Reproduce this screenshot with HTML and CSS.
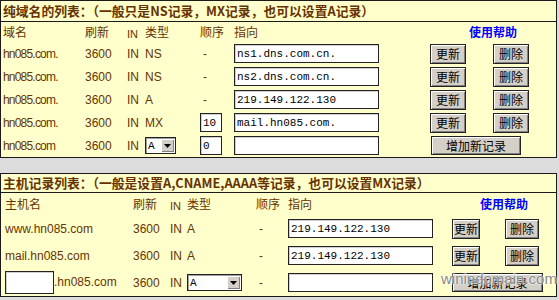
FILE: index.html
```html
<!DOCTYPE html>
<html lang="zh-CN">
<head>
    <meta charset="UTF-8">
    <title>域名解析管理</title>
    <link rel="stylesheet" href="styles.css">
</head>
<body>
<div class="panel panel-domain">
    <div class="panel-title">纯域名的列表：（一般只是NS记录，MX记录，也可以设置A记录）</div>
    <table class="records">
        <colgroup>
            <col style="width:84px"><col style="width:42px"><col style="width:18px"><col style="width:55px">
            <col style="width:34px"><col style="width:196px"><col style="width:63px"><col style="width:63px">
        </colgroup>
        <tr class="head">
            <td class="first">域名</td><td>刷新</td><td class="in-head">IN</td><td>类型</td>
            <td>顺序</td><td>指向</td><td colspan="2" class="help"><a href="#">使用帮助</a></td>
        </tr>
        <tr>
            <td class="first name">hn085.com.</td><td>3600</td><td>IN</td><td>NS</td><td class="dash">-</td>
            <td><input class="target" type="text" value="ns1.dns.com.cn."></td>
            <td><button class="btn">更新</button></td><td><button class="btn">删除</button></td>
        </tr>
        <tr>
            <td class="first name">hn085.com.</td><td>3600</td><td>IN</td><td>NS</td><td class="dash">-</td>
            <td><input class="target" type="text" value="ns2.dns.com.cn."></td>
            <td><button class="btn">更新</button></td><td><button class="btn">删除</button></td>
        </tr>
        <tr>
            <td class="first name">hn085.com.</td><td>3600</td><td>IN</td><td>A</td><td class="dash">-</td>
            <td><input class="target" type="text" value="219.149.122.130"></td>
            <td><button class="btn">更新</button></td><td><button class="btn">删除</button></td>
        </tr>
        <tr>
            <td class="first name">hn085.com.</td><td>3600</td><td>IN</td><td>MX</td>
            <td><input class="order" type="text" value="10"></td>
            <td><input class="target" type="text" value="mail.hn085.com."></td>
            <td><button class="btn">更新</button></td><td><button class="btn">删除</button></td>
        </tr>
        <tr>
            <td class="first name">hn085.com</td><td>3600</td><td>IN</td>
            <td><span class="select select-sm"><span class="select-val">A</span><span class="select-arrow"><svg width="7" height="4" viewBox="0 0 7 4"><path d="M0 0H7L3.5 4Z" fill="#000"/></svg></span></span></td>
            <td><input class="order" type="text" value="0"></td>
            <td><input class="target" type="text" value=""></td>
            <td colspan="2"><button class="btn btn-add">增加新记录</button></td>
        </tr>
    </table>
</div>

<div class="panel panel-host">
    <div class="panel-title">主机记录列表：（一般是设置A,CNAME,AAAA等记录，也可以设置MX记录）</div>
    <table class="records">
        <colgroup>
            <col style="width:132px"><col style="width:37px"><col style="width:17px"><col style="width:69px">
            <col style="width:32px"><col style="width:164px"><col style="width:53px"><col style="width:51px">
        </colgroup>
        <tr class="head">
            <td class="first">主机名</td><td>刷新</td><td class="in-head">IN</td><td>类型</td>
            <td>顺序</td><td>指向</td><td colspan="2" class="help"><a href="#">使用帮助</a></td>
        </tr>
        <tr>
            <td class="first">www.hn085.com</td><td>3600</td><td>IN</td><td>A</td><td class="dash">-</td>
            <td><input class="target" type="text" value="219.149.122.130"></td>
            <td><button class="btn btn-upd">更新</button></td><td><button class="btn btn-del">删除</button></td>
        </tr>
        <tr>
            <td class="first">mail.hn085.com</td><td>3600</td><td>IN</td><td>A</td><td class="dash">-</td>
            <td><input class="target" type="text" value="219.149.122.130"></td>
            <td><button class="btn btn-upd">更新</button></td><td><button class="btn btn-del">删除</button></td>
        </tr>
        <tr>
            <td class="first"><input class="host" type="text" value="">.hn085.com</td><td>3600</td><td>IN</td>
            <td><span class="select select-lg"><span class="select-val">A</span><span class="select-arrow"><svg width="7" height="4" viewBox="0 0 7 4"><path d="M0 0H7L3.5 4Z" fill="#000"/></svg></span></span></td>
            <td class="dash">-</td>
            <td><input class="target" type="text" value=""></td>
            <td colspan="2"><button class="btn btn-add">增加新记录</button></td>
        </tr>
    </table>
    <div class="watermark">winindomain.com</div>
</div>
</body>
</html>
```

FILE: styles.css
```css
body {
    margin: 0;
    background-color: #dcdcdc;
    font-family: "Liberation Sans", Arial, "Noto Sans CJK SC", sans-serif;
    font-size: 12px;
    color: #663300;
}

.panel {
    position: relative;
    width: 555px;
    background-color: #ffffcc;
    border: 1px solid #1a1a1a;
}

.panel-domain {
    margin-bottom: 15px;
}

.panel-title {
    height: 20px;
    line-height: 20px;
    padding-left: 2px;
    font-family: "Noto Sans CJK SC", sans-serif;
    font-weight: bold;
    font-size: 12.8px;
    color: #663300;
    border-bottom: 1px solid #1a1a1a;
    white-space: nowrap;
}

.panel-host .panel-title {
    height: 18px;
    line-height: 18px;
}

.records {
    table-layout: fixed;
    width: 555px;
    border-collapse: collapse;
    border-spacing: 0;
}

.records td {
    padding: 0;
    height: 23px;
    line-height: 14px;
    vertical-align: middle;
    white-space: nowrap;
}

.records .head td {
    height: 20px;
    font-family: "Noto Sans CJK SC", sans-serif;
}

.panel-host .records td {
    height: 27px;
}

.panel-host .records .head td {
    height: 22px;
}

.records td.first {
    padding-left: 2px;
}

.records td.name {
    letter-spacing: -0.8px;
}

.panel-host .records td.first {
    padding-left: 4px;
}

.records .head td.in-head {
    height: 16px;
    padding-top: 4px;
    font-family: "Liberation Sans", Arial, sans-serif;
    font-size: 11px;
}

.panel-host .records .head td.in-head {
    height: 18px;
}

.records td.dash {
    padding-left: 3px;
}

.help {
    text-align: center;
}

.help a {
    color: #0000ff;
    font-weight: bold;
    text-decoration: none;
    font-family: "Noto Sans CJK SC", sans-serif;
}

input.target,
input.order,
input.host {
    box-sizing: border-box;
    height: 19px;
    margin: 0;
    padding: 0 2px;
    background: #fff;
    border: 1px solid #222;
    box-shadow: inset 1px 1px 0 #cfcfcf;
    font-family: "Liberation Mono", monospace;
    font-size: 11px;
    color: #000;
    vertical-align: middle;
}

input.target {
    width: 145px;
}

input.order {
    width: 22px;
}

input.host {
    width: 49px;
    height: 23px;
}

.btn {
    box-sizing: border-box;
    width: 36px;
    height: 20px;
    margin: 0;
    padding: 0;
    background-color: #d4d0c8;
    border: 1px solid #222;
    box-shadow: inset 1px 1px 0 #fff, inset -1px -1px 0 #808080;
    font-family: "Noto Sans CJK SC", sans-serif;
    font-size: 12px;
    line-height: 16px;
    color: #000;
    vertical-align: middle;
}

.btn-upd {
    width: 28px;
}

.btn-del {
    width: 34px;
}

.btn-add {
    width: 90px;
    height: 19px;
    margin-left: 1px;
}

.panel-host .btn-add {
    width: 91px;
    margin-left: 0;
}

.select {
    box-sizing: border-box;
    display: inline-flex;
    align-items: center;
    height: 17px;
    background: #fff;
    border: 1px solid #222;
    box-shadow: inset 1px 1px 0 #a0a0a0;
    vertical-align: middle;
}

.select-sm {
    width: 31px;
}

.select-lg {
    width: 55px;
}

.select-val {
    flex: 1;
    padding-left: 2px;
    font-family: "Liberation Mono", monospace;
    font-size: 11px;
    color: #000;
}

.select-arrow {
    box-sizing: border-box;
    display: flex;
    align-items: center;
    justify-content: center;
    width: 13px;
    height: 13px;
    margin-right: 1px;
    background-color: #d4d0c8;
    box-shadow: inset 1px 1px 0 #fff, inset -1px -1px 0 #808080;
}

.watermark {
    position: absolute;
    left: 440px;
    top: 96px;
    font-family: "Liberation Sans", Arial, sans-serif;
    font-size: 15px;
    color: #8a8a8a;
    text-shadow: 0 0 2px #fff, 0 0 2px #fff;
    pointer-events: none;
}
```
